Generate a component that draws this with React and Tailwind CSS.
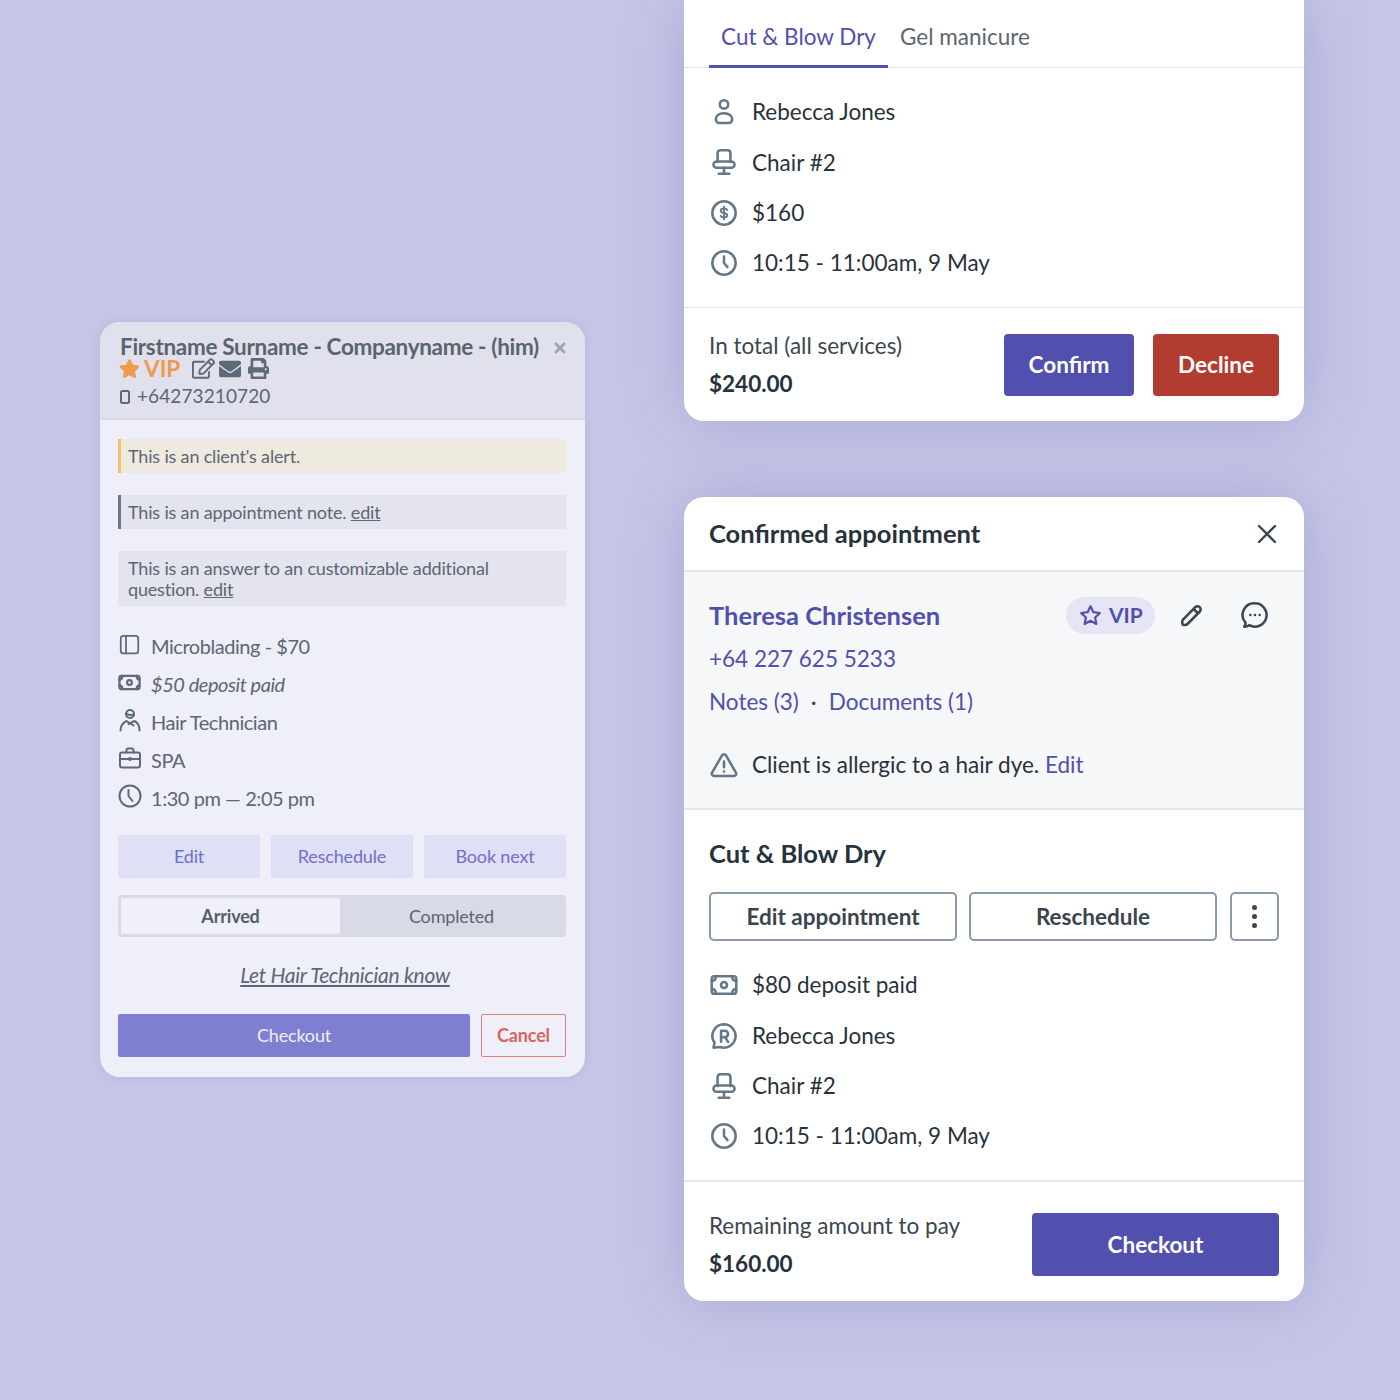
import React from "react";
import { FaStar, FaRegEdit, FaEnvelope, FaPrint, FaTimes } from "react-icons/fa";

const I = ({ children, size = 28, view = 24, sw = 2.200, className = "" }) => (
  <svg width={size} height={size} viewBox={`0 0 ${view} ${view}`} fill="none" stroke="currentColor" strokeWidth={sw} strokeLinecap="round" strokeLinejoin="round" className={`shrink-0 ${className}`}>
    {children}
  </svg>
);
const Person = (p) => (<I {...p}><circle cx="12" cy="5.500" r="3.600" /><path d="M12 13c-4.500 0-7 2.400-7 5.200 0 1.800 1.200 3.300 3 3.300h8c1.800 0 3-1.500 3-3.300 0-2.800-2.500-5.200-7-5.200z" /></I>);
const Chair = (p) => (<I {...p}><path d="M6.500 12V4.500C6.500 3 7.500 2 9 2h6c1.500 0 2.500 1 2.500 2.500V12" /><rect x="3" y="11.500" width="18" height="5.500" rx="2.700" /><path d="M12 17v5M7.500 22h9" /></I>);
const Dollar = (p) => (<I {...p}><circle cx="12" cy="12" r="10" /><path d="M14.800 9.500c-.4-.9-1.500-1.400-2.800-1.400-1.600 0-2.800.8-2.800 1.900s1.100 1.600 2.800 2 2.800.9 2.800 2-1.200 1.900-2.800 1.900c-1.300 0-2.400-.5-2.800-1.400M12 6.500v11" strokeWidth="1.600" /></I>);
const Clock = (p) => (<I {...p}><circle cx="12" cy="12" r="10" /><path d="M12 6.500V12l3 3.500" /></I>);
const Money = (p) => (<I {...p}><rect x="1.500" y="4.500" width="21" height="15" rx="2" /><circle cx="12" cy="12" r="2.600" /><path d="M1.500 8.500c2 0 3.500-1.500 3.500-4M22.500 8.500c-2 0-3.500-1.500-3.500-4M1.500 15.500c2 0 3.500 1.500 3.500 4M22.500 15.500c-2 0-3.500 1.500-3.500 4" /></I>);
const RBubble = (p) => (<I {...p}><path d="M12 2a10 10 0 1 1-3.500 19.400L3 22l.9-4.200A10 10 0 0 1 12 2z" /><path d="M9.500 17V7.500h3.200a2.700 2.700 0 0 1 0 5.500H9.500M13 13l2.500 4" /></I>);
const Warn = (p) => (<I {...p}><path d="M10.300 3.800 1.800 18.500A2 2 0 0 0 3.500 21.500h17a2 2 0 0 0 1.700-3L13.700 3.800a2 2 0 0 0-3.400 0z" /><path d="M12 9v5M12 17.500v.1" /></I>);
const Row = ({ icon, children }) => (
  <div className="flex items-center h-[30px] text-[22.500px] text-[#28323c]">
    <span className="w-[30px] flex justify-center text-[#647888]">{icon}</span>
    <span className="ml-[13px]">{children}</span>
  </div>
);
const LRow = ({ icon, children, italic }) => (
  <div className="flex h-[38px] items-center">
    <span className="w-[23px] flex justify-center text-[#5e6a7a] -mt-[6px]">{icon}</span>
    <span className={`ml-[10px] -mt-[2px] text-[20px] tracking-[-0.45px] ${italic ? "italic" : ""}`}>{children}</span>
  </div>
);

function LeftCard() {
  return (
    <div className="w-[485px] -mt-[1px] rounded-[20px] overflow-hidden bg-[#eeeff8] text-[#5c6674] shadow-[0_0_8px_rgba(90,90,150,0.12)]">
      <div className="h-[98px] bg-[#e0e1ec] border-b-2 border-[#d8d9e5] pl-[20px] pr-[17px] pt-[13px] relative">
        <div className="text-[22.500px] font-bold leading-[24px] tracking-[-0.32px] text-[#5a6470] whitespace-nowrap">Firstname Surname - Companyname - (him)</div>
        <FaTimes className="absolute right-[17px] top-[18px] text-[#9da5b0]" size={16} />
        <div className="flex items-center h-[21px] -mt-[1px]">
          <FaStar size={21} className="-ml-[1px] text-[#ef9b4b]" />
          <span className="ml-[4px] text-[22.500px] font-bold leading-[21px] text-[#ef9b4b]">VIP</span>
          <FaRegEdit size={23} className="ml-[12px] text-[#5e6a7a]" />
          <FaEnvelope size={22} className="ml-[4px] text-[#5e6a7a]" />
          <FaPrint size={21} className="ml-[7px] text-[#5e6a7a]" />
        </div>
        <div className="flex items-center mt-[5px] leading-[24px]">
          <svg width="10" height="14" viewBox="0 0 10 14" fill="none" stroke="#5e6a7a" strokeWidth="2" className="mt-[2px]"><rect x="1" y="1" width="8" height="12" rx="1.500" /></svg>
          <span className="ml-[7px] text-[19px] tracking-[0.1px]">+64273210720</span>
        </div>
      </div>
      <div className="pl-[18px] pr-[19px] pt-[19px] pb-[20px] text-[18px] tracking-[-0.17px]">
        <div className="h-[34px] bg-[#eeeadf] border-l-[3px] border-[#f5bd6b] pl-[7px] pt-[1px] flex items-center">This is an client's alert.</div>
        <div className="h-[34px] mt-[22px] bg-[#e3e4ee] border-l-[3px] border-[#6c7689] pl-[7px] pt-[1px] flex items-center">
          <span>This is an appointment note. <u>edit</u></span>
        </div>
        <div className="h-[55px] mt-[22px] bg-[#e3e4ee] pl-[10px] pt-[7px] leading-[21px]">
          This is an answer to an customizable additional<br />question. <u>edit</u>
        </div>
        <div className="mt-[22px]">
          <LRow icon={<I size={21} sw={2}><rect x="2" y="2" width="20" height="20" rx="3" /><path d="M8 2v20" /></I>}>Microblading - $70</LRow>
          <LRow italic icon={<I size={23} sw={2.300}><rect x="1.500" y="5" width="21" height="14" rx="2" /><circle cx="12" cy="12" r="2.500" /><path d="M1.500 9c2 0 3-1.500 3-4M22.500 9c-2 0-3-1.500-3-4M1.500 15c2 0 3 1.500 3 4M22.500 15c-2 0-3 1.500-3 4" /></I>}>$50 deposit paid</LRow>
          <LRow icon={<I size={24} sw={2}><circle cx="12" cy="6" r="4" /><path d="M8 5.500c3 2.500 6 1 8 1M2.500 22.500c0-5 3-8 6-9.500l7 4.500M21.500 22.500c0-5-2-8-5-9.500l-6 3" /></I>}>Hair Technician</LRow>
          <LRow icon={<I size={24} sw={2}><rect x="2" y="6.500" width="20" height="15" rx="2" /><path d="M8.500 6.500V4a1.500 1.500 0 0 1 1.500-1.500h4A1.500 1.500 0 0 1 15.500 4v2.500M2 13h20" /><circle cx="12" cy="13" r="1" fill="currentColor" /></I>}>SPA</LRow>
          <LRow icon={<I size={24} sw={2}><circle cx="12" cy="12" r="10.500" /><path d="M10.500 6v6l4 5" /></I>}>1:30 pm — 2:05 pm</LRow>
        </div>
        <div className="flex justify-between mt-[17px] text-[#6f71c9]">
          <div className="w-[142px] h-[43px] rounded-[2px] bg-[#dfdff5] flex items-center justify-center">Edit</div>
          <div className="w-[142px] h-[43px] rounded-[2px] bg-[#dfdff5] flex items-center justify-center">Reschedule</div>
          <div className="w-[142px] h-[43px] rounded-[2px] bg-[#dfdff5] flex items-center justify-center">Book next</div>
        </div>
        <div className="flex h-[42px] mt-[17px] rounded-[4px] bg-[#d8dae5] p-[3px]">
          <div className="w-[219px] bg-[#eff0f9] rounded-[2px] flex items-center justify-center font-bold text-[#545d6a]">Arrived</div>
          <div className="flex-1 flex items-center justify-center">Completed</div>
        </div>
        <div className="mt-[25px] h-[26px] flex items-center justify-center pl-[6px] text-[21px] italic underline tracking-[-0.3px]">Let Hair Technician know</div>
        <div className="flex justify-between mt-[26px]">
          <div className="w-[352px] h-[43px] rounded-[2px] bg-[#7e7fd1] text-[#eeeff8] flex items-center justify-center">Checkout</div>
          <div className="w-[85px] h-[43px] rounded-[2px] border border-[#e07f7c] text-[#d9635f] font-bold flex items-center justify-center">Cancel</div>
        </div>
      </div>
    </div>
  );
}

function TopCard() {
  return (
    <div className="w-[620px] h-[422px] -mt-[1px] bg-white rounded-b-[20px] overflow-hidden shadow-[0_0_60px_rgba(90,90,160,0.28)] flex flex-col">
      <div className="h-[69px] border-b border-[#dfe3ea] flex px-[25px] text-[22.500px]">
        <div className="w-[179px] h-[69px] border-b-[3px] border-[#5150ae] text-[#5150ae] flex items-center justify-center pt-[9px]">Cut &amp; Blow Dry</div>
        <div className="ml-[12px] h-[68px] flex items-center text-[#5c6670] pt-[8px]">Gel manicure</div>
      </div>
      <div className="h-[240px] border-b border-[#dfe3ea] px-[25px] pt-[29px] flex flex-col gap-[20.400px]">
        <Row icon={<Person />}>Rebecca Jones</Row>
        <Row icon={<Chair />}>Chair #2</Row>
        <Row icon={<Dollar />}>$160</Row>
        <Row icon={<Clock />}>10:15 - 11:00am, 9 May</Row>
      </div>
      <div className="flex-1 flex items-center justify-between pl-[25px] pr-[25px]">
        <div className="text-[22.500px] mt-[1px]">
          <div className="text-[#3c4650] leading-[38px]">In total (all services)</div>
          <div className="font-bold text-[#28323c] leading-[38px]">$240.00</div>
        </div>
        <div className="flex gap-[19px] text-[22.500px] font-bold text-white mt-[1px]">
          <div className="w-[130px] h-[62px] rounded-[4px] bg-[#5150ae] flex items-center justify-center">Confirm</div>
          <div className="w-[126px] h-[62px] rounded-[4px] bg-[#b33c31] flex items-center justify-center">Decline</div>
        </div>
      </div>
    </div>
  );
}

function BottomCard() {
  return (
    <div className="w-[620px] mt-[76px] bg-white rounded-[20px] overflow-hidden shadow-[0_0_60px_rgba(90,90,160,0.28)] text-[#28323c]">
      <div className="h-[75px] border-b-2 border-[#e3e6ec] px-[25px] flex items-center justify-between">
        <div className="text-[25.500px] font-bold">Confirmed appointment</div>
        <svg width="24" height="24" viewBox="0 0 24 24" fill="none" stroke="#3a4550" strokeWidth="2.400" strokeLinecap="round"><path d="M4 4l16 16M20 4 4 20" /></svg>
      </div>
      <div className="h-[238px] bg-[#f5f7f9] border-b-2 border-[#e3e6ec] px-[25px] pt-[23px]">
        <div className="flex items-center justify-between h-[40px]">
          <div className="text-[25.500px] font-bold text-[#5150ae]">Theresa Christensen</div>
          <div className="flex items-center">
            <div className="w-[89px] h-[37px] rounded-full bg-[#e5e5f5] flex items-center pl-[12px] text-[#5150ae] text-[21px] font-bold">
              <I size={25} sw={2.100}><path d="M12 3l2.700 5.800 6.300.8-4.600 4.300 1.200 6.300L12 17.100 6.400 20.200l1.200-6.300L3 9.600l6.300-.8z" /></I>
              <span className="ml-[6px]">VIP</span>
            </div>
            <svg className="ml-[24px] text-[#3a4550]" width="26" height="26" viewBox="0 0 24 24" fill="none" stroke="currentColor" strokeWidth="2.400" strokeLinejoin="round" strokeLinecap="round"><path d="M3.500 16.500 15 4.800a2.800 2.800 0 0 1 4.200 4L7.800 20.300c-1 1-3.500 1.300-4.300.5-.8-.9-.7-3.300 0-4.300zM13.500 6.500l4 4" /></svg>
            <svg className="ml-[36px] mr-[10px] text-[#3a4550]" width="28" height="28" viewBox="0 0 24 24" fill="none" stroke="currentColor" strokeWidth="2.200" strokeLinejoin="round" strokeLinecap="round"><path d="M12 2a10 10 0 1 1-5 18.700c-1 .9-2.500 1.300-4.200 1.300.8-1 1.200-2.300 1-3.500A10 10 0 0 1 12 2z" /><path d="M8 12h.01M12 12h.01M16 12h.01" /></svg>
          </div>
        </div>
        <div className="text-[22.500px] text-[#5150ae] h-[43px] leading-[43px] mt-[2px]">+64 227 625 5233</div>
        <div className="text-[22.500px] text-[#5150ae] h-[43px] leading-[43px] flex">
          <span>Notes (3)</span><span className="mx-[12px] text-[#3a4550]">·</span><span>Documents (1)</span>
        </div>
        <div className="h-[30px] mt-[27px]"><Row icon={<Warn />}><span>Client is allergic to a hair dye. <span className="text-[#5150ae]">Edit</span></span></Row></div>
      </div>
      <div className="px-[25px] pt-[25px] h-[372px] border-b-2 border-[#e3e6ec]">
        <div className="text-[25.500px] font-bold h-[36px] leading-[36px]">Cut &amp; Blow Dry</div>
        <div className="flex mt-[21px] text-[22.500px] font-bold text-[#3a4550]">
          <div className="w-[248px] h-[49px] rounded-[5px] border-2 border-[#8a9aaa] flex items-center justify-center">Edit appointment</div>
          <div className="ml-[12px] w-[248px] h-[49px] rounded-[5px] border-2 border-[#8a9aaa] flex items-center justify-center">Reschedule</div>
          <div className="ml-[13px] w-[49px] h-[49px] rounded-[5px] border-2 border-[#8a9aaa] flex flex-col items-center justify-center gap-[4px]">
            <span className="w-[5px] h-[5px] rounded-full bg-[#3a4550]" />
            <span className="w-[5px] h-[5px] rounded-full bg-[#3a4550]" />
            <span className="w-[5px] h-[5px] rounded-full bg-[#3a4550]" />
          </div>
        </div>
        <div className="flex flex-col gap-[20.300px] mt-[29.300px]">
          <Row icon={<Money />}>$80 deposit paid</Row>
          <Row icon={<RBubble />}>Rebecca Jones</Row>
          <Row icon={<Chair />}>Chair #2</Row>
          <Row icon={<Clock />}>10:15 - 11:00am, 9 May</Row>
        </div>
      </div>
      <div className="h-[119px] px-[25px] pt-[6px] flex items-center justify-between">
        <div className="text-[22.500px]">
          <div className="text-[#3c4650] leading-[38px]">Remaining amount to pay</div>
          <div className="font-bold leading-[38px]">$160.00</div>
        </div>
        <div className="w-[247px] h-[63px] rounded-[4px] bg-[#5150ae] text-white text-[22.500px] font-bold flex items-center justify-center">Checkout</div>
      </div>
    </div>
  );
}

export default function App() {
  return (
    <div className="w-[1400px] h-[1400px] overflow-hidden bg-[#c5c6e6] flex items-center pl-[100px] font-['Lato','Open_Sans',sans-serif]">
      <LeftCard />
      <div className="ml-[99px] self-start flex flex-col">
        <TopCard />
        <BottomCard />
      </div>
    </div>
  );
}
